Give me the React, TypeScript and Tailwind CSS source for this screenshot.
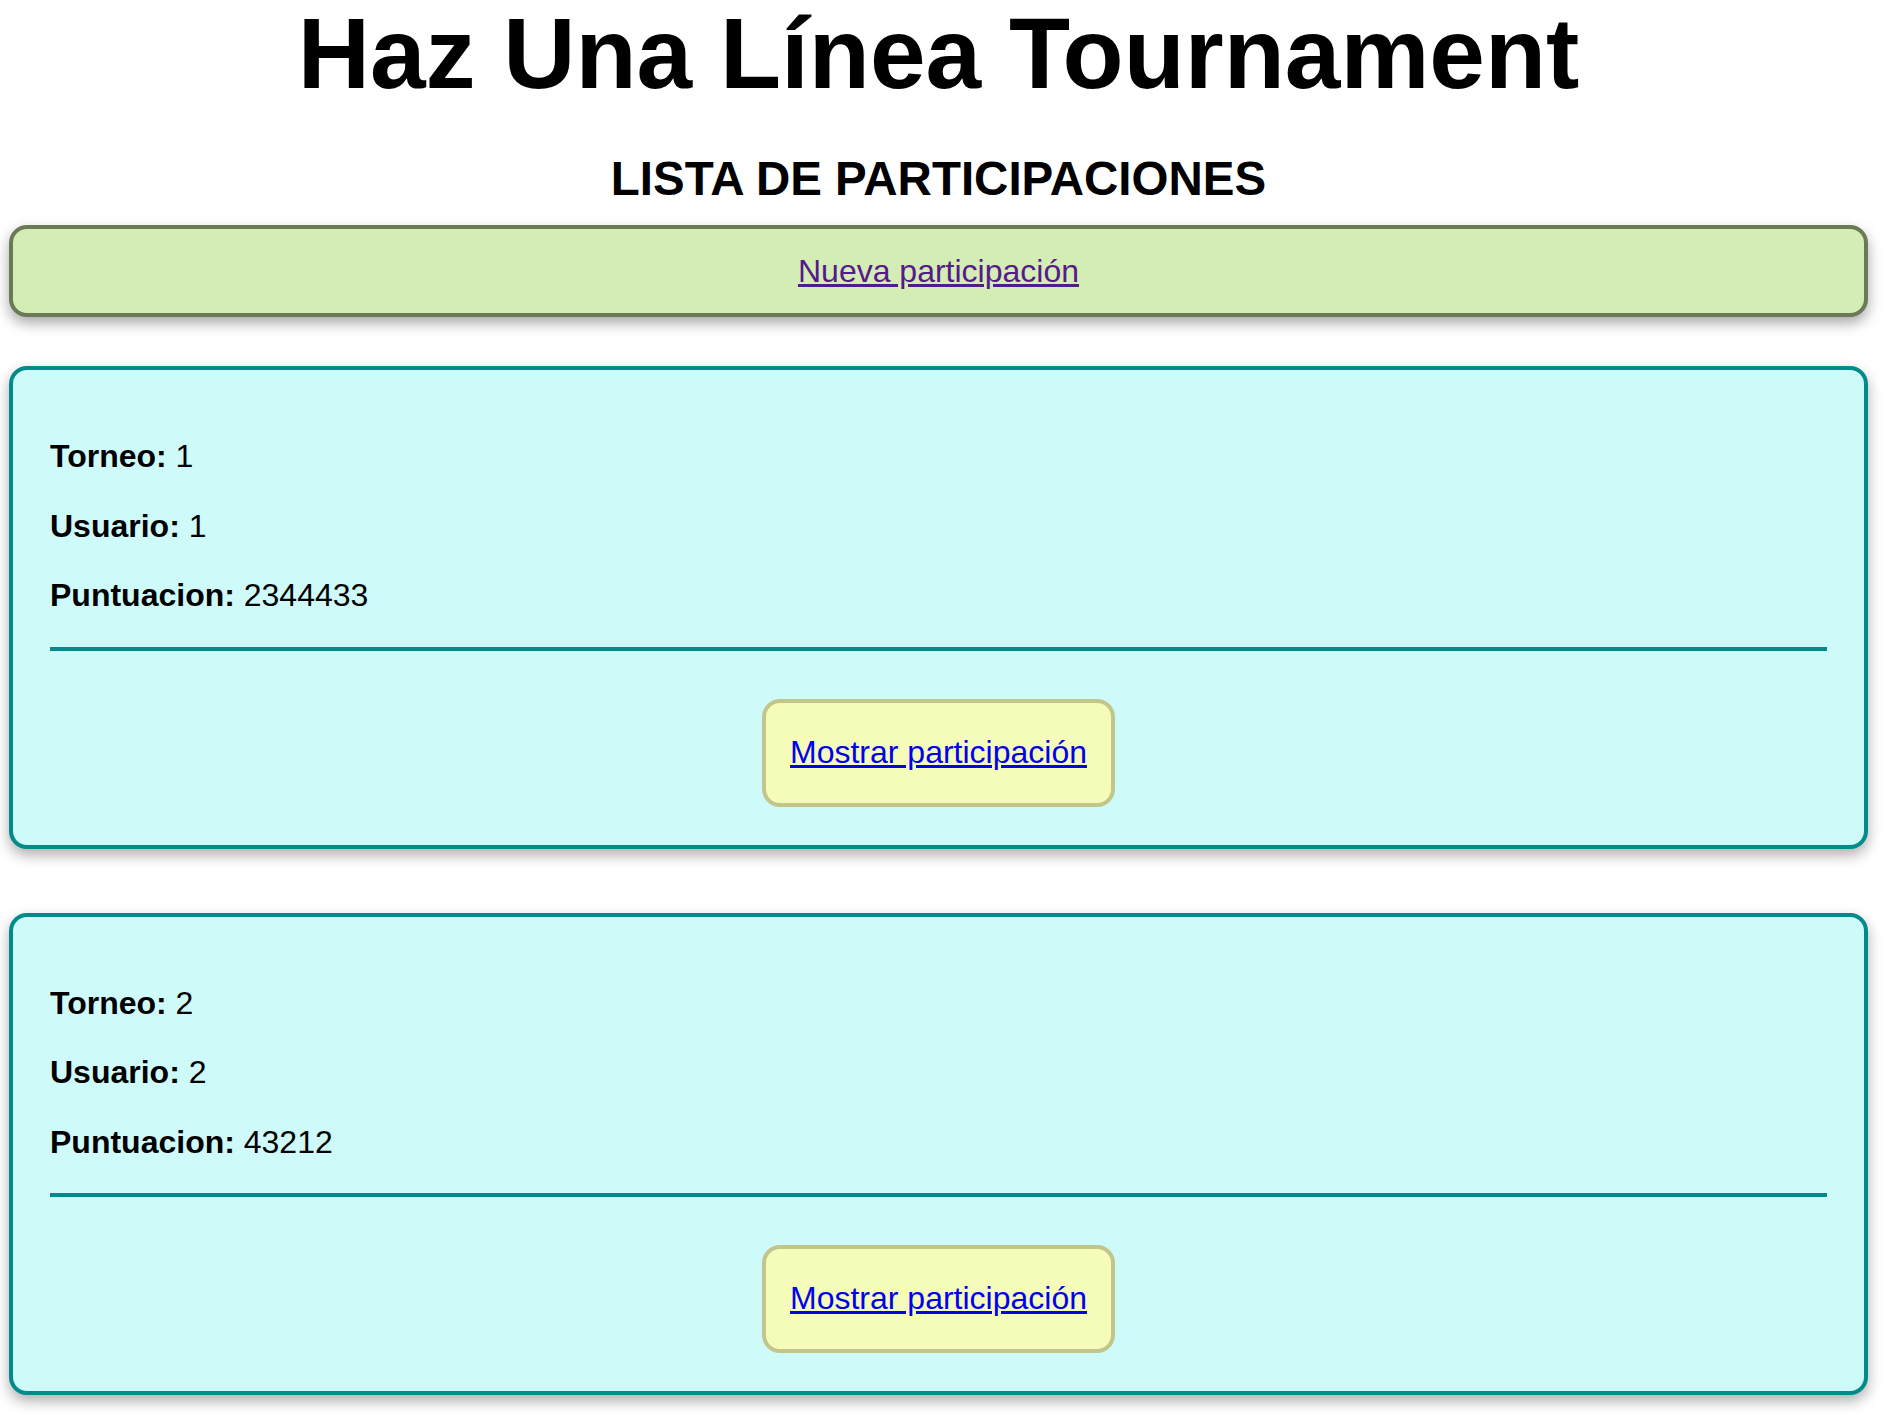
import React from 'react'

// Lista de participaciones — Arial-like (Liberation Sans), teal cards, lime "nueva" bar

const participaciones = [
  { torneo: 1, usuario: 1, puntuacion: 2344433 },
  { torneo: 2, usuario: 2, puntuacion: 43212 },
]

function Field({ label, value }: { label: string; value: number }) {
  return (
    <p className="text-[32px] leading-[37px] text-black">
      <span className="font-bold">{label}:</span> {value}
    </p>
  )
}

export default function App() {
  return (
    <div
      className="min-h-[1415px] bg-white pl-[9px] pr-[16px]"
      style={{ fontFamily: '"Liberation Sans", Arial, sans-serif' }}
    >
      <h1 className="pt-[3px] text-center text-[100px] font-bold leading-[100px] text-black">
        Haz Una Línea Tournament
      </h1>
      <h2 className="mt-[52px] text-center text-[47.5px] font-bold leading-[47px] text-black">
        LISTA DE PARTICIPACIONES
      </h2>

      {/* Nueva participación */}
      <div className="mt-[23px] flex h-[92px] items-start justify-center rounded-[18px] border-4 border-[#6b7a56] bg-[#d4edb4] pt-[24px] shadow-[0_6px_14px_rgba(0,0,0,0.35)]">
        <a href="#" className="text-[32px] leading-[37px] text-[#551a8b] underline">
          Nueva participación
        </a>
      </div>

      <div className="mt-[49px] flex flex-col gap-[64px]">
        {participaciones.map((p) => (
          <div
            key={p.torneo}
            className="rounded-[18px] border-4 border-[#008b8b] bg-[#cffafa] px-[37px] pt-[68px] pb-[38px] shadow-[0_6px_14px_rgba(0,0,0,0.32)]"
          >
            <div className="flex flex-col gap-[32.5px]">
              <Field label="Torneo" value={p.torneo} />
              <Field label="Usuario" value={p.usuario} />
              <Field label="Puntuacion" value={p.puntuacion} />
            </div>
            <div className="mt-[32.5px] h-[4px] bg-[#008b8b]" />
            <div className="mt-[48px] flex justify-center">
              <div className="rounded-[18px] border-4 border-[#c2c68a] bg-[#f5fbb9] px-[24px] pt-[31px] pb-[32px]">
                <a href="#" className="text-[32px] leading-[37px] text-[#0000ee] underline">
                  Mostrar participación
                </a>
              </div>
            </div>
          </div>
        ))}
      </div>
    </div>
  )
}
